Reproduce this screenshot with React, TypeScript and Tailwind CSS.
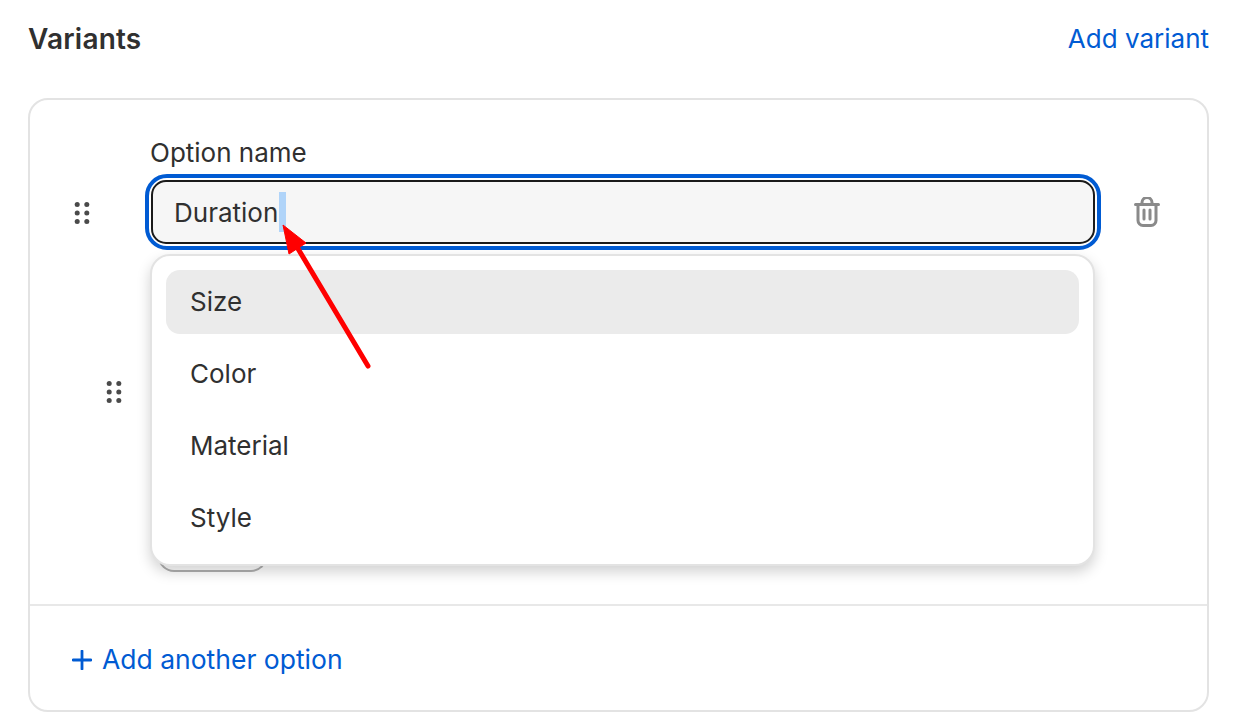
import React from "react";

const options = ["Size", "Color", "Material", "Style"];

const DragHandle = () => {
  return (
    <svg width="16" height="24" viewBox="0 0 16 24" fill="#4a4a4a">
      <circle cx="3.2" cy="3.5" r="2.5" />
      <circle cx="12.8" cy="3.5" r="2.5" />
      <circle cx="3.2" cy="12" r="2.5" />
      <circle cx="12.8" cy="12" r="2.5" />
      <circle cx="3.2" cy="20.5" r="2.5" />
      <circle cx="12.8" cy="20.5" r="2.5" />
    </svg>
  );
};

const TrashIcon = () => {
  return (
    <svg width="26" height="30" viewBox="0 0 26 30" fill="none" stroke="#8a8a8a" strokeWidth="3" strokeLinecap="round">
      <path d="M1.5 7.5h23" />
      <path d="M8 7V5.5a4.5 4.5 0 0 1 10 0V7" />
      <path d="M4 8v15.5a5 5 0 0 0 5 5h8a5 5 0 0 0 5-5V8" />
      <path d="M10 13v9M16 13v9" />
    </svg>
  );
};

export default function App() {
  return (
    <div className="h-[721px] w-[1235px] overflow-hidden bg-white pl-[28px] pr-[26px] pt-[20px] font-['Inter',sans-serif] text-[#303030] relative">
      <div className="flex h-[36px] items-center justify-between">
        <h2 className="mt-[2px] text-[28px] font-semibold tracking-[0.2px]">Variants</h2>
        <a className="text-[26px] text-[#005bd3]">Add variant</a>
      </div>

      <div className="mt-[42px] h-[614px] rounded-[20px] border-2 border-[#e3e3e3]">
        <div className="relative h-[506px] border-b-2 border-[#e8e8e8]">
          <div className="flex">
            <div className="flex w-[115px] justify-end pr-[55px] pt-[101px]">
              <DragHandle />
            </div>
            <div className="w-[956px] pt-[35px]">
              <p className="h-[36px] pl-[5px] text-[26px] leading-[36px]">Option name</p>
              <div className="mt-[3px] h-[76px] rounded-[22px] border-[4px] border-[#005bd3] p-[2px]">
                <div className="flex h-full items-center rounded-[15px] border-2 border-[#1a1a1a] bg-[#f6f6f6] pl-[21px] text-[26px]">
                  <span>Duration</span>
                  <span className="ml-px h-[40px] w-[7px] bg-[#b0d4f9]" />
                </div>
              </div>
            </div>
            <div className="flex flex-1 justify-start pl-[33px] pt-[97px]">
              <TrashIcon />
            </div>
          </div>

          <div className="mt-[130px] pl-[76px]">
            <DragHandle />
          </div>
          <div className="absolute left-[128px] top-[451px] h-[21px] w-[109px] rounded-b-[16px] border-2 border-t-0 border-[#b0b0b0]" />

          <div className="absolute left-[120px] top-[154px] w-[945px] rounded-[20px] border-2 border-[#e3e3e3] bg-white p-[14px] shadow-[0_6px_14px_rgba(0,0,0,0.18)]">
            {options.map((o, i) => (
              <div
                key={o}
                className={`flex h-[64px] items-center rounded-[14px] pb-[2px] pl-[24px] text-[26px] ${i > 0 ? "mt-[8px]" : ""} ${i === 0 ? "bg-[#ebebeb]" : ""}`}
              >
                {o}
              </div>
            ))}
          </div>
        </div>

        <div className="flex h-[104px] items-center pl-[42px] pt-[3px] text-[26.5px] text-[#005bd3]">
          <svg width="20" height="20" viewBox="0 0 20 20" fill="none" stroke="#005bd3" strokeWidth="2.8" strokeLinecap="round">
            <path d="M10 1v18M1 10h18" />
          </svg>
          <span className="ml-[10px]">Add another option</span>
        </div>
      </div>

      {/* red annotation arrow */}
      <svg className="absolute left-[270px] top-[220px]" width="110" height="155" viewBox="0 0 110 155">
        <path d="M98 146 L27 27" stroke="#ff0000" strokeWidth="5" strokeLinecap="round" fill="none" />
        <path d="M13 5 L36 23 L19 34 Z" fill="#ff0000" stroke="#ff0000" strokeWidth="1" strokeLinejoin="round" />
      </svg>
    </div>
  );
}
